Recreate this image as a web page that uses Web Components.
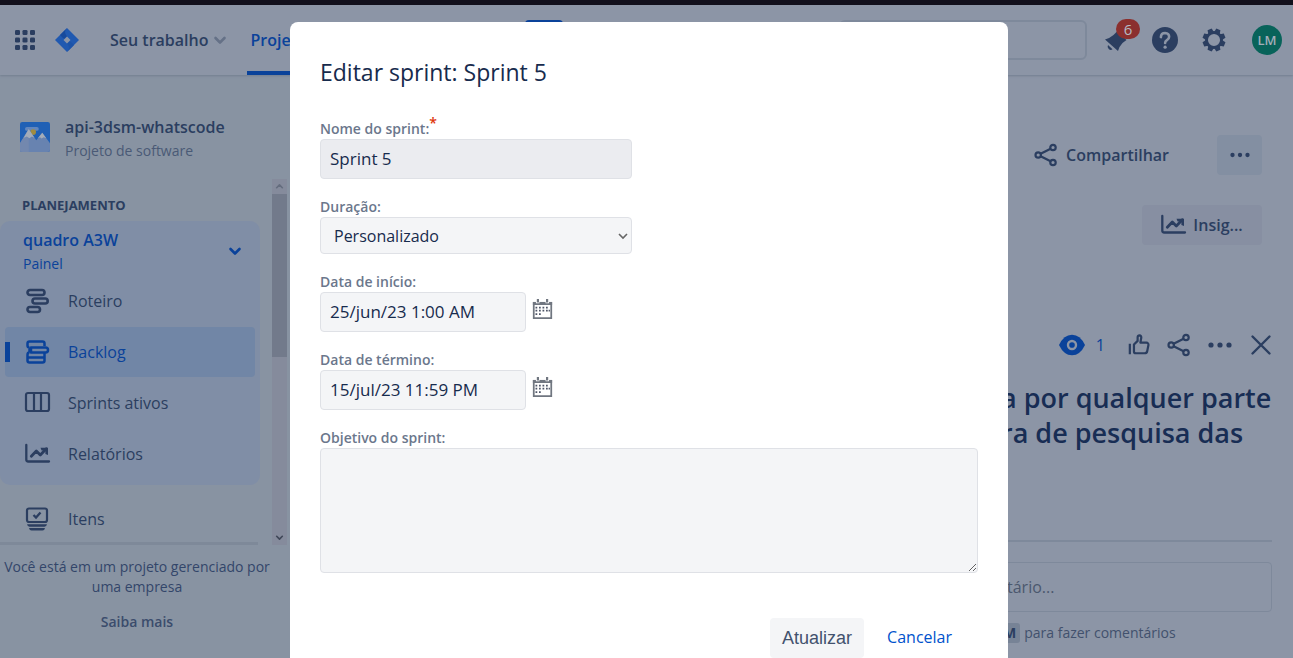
<!DOCTYPE html>
<html lang="pt-BR">
<head>
<meta charset="utf-8">
<title>Editar sprint</title>
<style>
  html, body { height: 100%; margin: 0; }
  body {
    overflow: hidden;
    background: #8c95a6;
    color: #2b3e60;
    font-family: "Open Sans", "Noto Sans", sans-serif;
    font-size: 16px;
    --blue: #0a429a;
    --line: #7e899b;
  }
</style>
</head>
<body>
<jira-page></jira-page>

<script>
const define = (name, html) => {
  const template = document.createElement('template');
  template.innerHTML = '<style>*{box-sizing:border-box}</style>' + html;
  customElements.define(name, class extends HTMLElement {
    constructor() {
      super();
      this.attachShadow({ mode: 'open' }).append(template.content.cloneNode(true));
    }
  });
};

const share = '<g fill="none" stroke="currentColor" stroke-width="2.2"><circle cx="4.2" cy="12" r="2.7"/><circle cx="19" cy="4.5" r="2.7"/><circle cx="19" cy="19.5" r="2.7"/><path d="M6.6 10.8 16.6 5.7M6.6 13.2l10 5.1"/></g>';
const chart = '<path d="M1.3 3v14.5q0 2 2 2H24" fill="none" stroke="currentColor" stroke-width="2.3" stroke-linecap="round"/><path d="m6.3 14.2 5-5.2 4 4 6-6.2" fill="none" stroke="currentColor" stroke-width="2.8" stroke-linecap="round" stroke-linejoin="round"/><path d="M15.5 5.8H23V13l-2.6-1V8.4h-3.8z" fill="currentColor"/>';
const ICONS = {
  apps: '<g fill="currentColor">' + [2, 9.5, 17].map(y => [2, 9.5, 17].map(x => `<rect x="${x}" y="${y}" width="5" height="5" rx="1.3"/>`).join('')).join('') + '</g>',
  logo: '<path d="M12 0 24 12 12 24 0 12z" fill="#2059b0"/><path d="M12 0q-4 4 0 8.500V12l-4-2-3-3z" fill="#174a9c"/><path d="M12 24q4-4 0-8.500V12l4 2 3 3z" fill="#1c53a8"/><path d="m12 8.500 3.500 3.500-3.500 3.500L8.500 12z" fill="#8c95a6"/>',
  chevron: '<path d="m7.500 10 4.500 4.500 4.500-4.500" fill="none" stroke="currentColor" stroke-width="2.600" stroke-linecap="round" stroke-linejoin="round"/>',
  bell: '<path d="M1 11.500q5-1.500 8.500-4.500l4-4 9 9-4 3q-3 3-4.500 8z" fill="currentColor"/><path d="M4 17l4.500 4.300q-2 1.400-3.800-.3T4 17z" fill="currentColor"/>',
  help: '<circle cx="12" cy="12" r="12" fill="currentColor"/><path d="M8.200 9.300q.2-3.800 3.900-3.800 3.700.2 3.700 3.500 0 1.900-2 3.100-1.700 1-1.700 2.700" fill="none" stroke="#8c95a6" stroke-width="2.400" stroke-linecap="round"/><circle cx="12.100" cy="18.600" r="1.500" fill="#8c95a6"/>',
  gear: '<circle cx="12" cy="12" r="7.500" fill="none" stroke="currentColor" stroke-width="2.900"/><g fill="currentColor">' + [22.5, 67.5, 112.5, 157.5, 202.5, 247.5, 292.5, 337.5].map(a => `<path transform="rotate(${a} 12 12)" d="M9 4.500 9.800.5h4.400l.8 4z"/>`).join('') + '</g>',
  roadmap: '<g fill="none" stroke="currentColor" stroke-width="2.600"><rect x="2.500" y="1" width="17" height="5" rx="2.500"/><rect x="7.500" y="9.500" width="15.200" height="5" rx="2.500"/><rect x="2.500" y="18" width="12.500" height="5" rx="2.500"/></g>',
  backlog: '<g fill="none" stroke="currentColor" stroke-width="2.500" stroke-linejoin="round"><path d="M4.500 7.500q-2 0-2-2v-2q0-2 2-2h13q2 0 2 2v2.500M6 7.500h14.500a2 2 0 0 1 0 5H6zM4.500 12.500q-2 0-2 2.200v5.800q0 2 2 2h13q2 0 2-2v-8M4.500 7.500v5M2.500 17.500h17"/></g>',
  board: '<g fill="none" stroke="currentColor" stroke-width="2.200"><rect x="1" y="2" width="23" height="18" rx="2"/><path d="M9 2v18M16 2v18"/></g>',
  chart, share,
  items: '<rect x="2" y="1.500" width="20" height="13.500" rx="2" fill="none" stroke="currentColor" stroke-width="2.200"/><path d="m8.500 8 2.500 2.500 4.500-5" fill="none" stroke="currentColor" stroke-width="2.300"/><path d="M2 17.300h20q-.5 2.400-2.500 2.400h-15Q2.500 19.700 2 17.300zM4 21h16q-.5 2.500-2.500 2.500h-11Q4.500 23.500 4 21z" fill="currentColor"/>',
  dots: '<g fill="currentColor"><circle cx="3" cy="12" r="2.600"/><circle cx="12" cy="12" r="2.600"/><circle cx="21" cy="12" r="2.600"/></g>',
  eye: '<path d="M0 12Q4.500 2.500 12 2.500T24 12q-4.500 9.500-12 9.500T0 12z" fill="currentColor"/><circle cx="12" cy="12" r="3.700" fill="currentColor" stroke="#8c95a6" stroke-width="2.200"/>',
  thumb: '<path d="M2 10.500V22M6.500 11.500l4-4V3.500q.2-2 2-2 2 .2 2 2.500L13.500 9.500h6.500q2.500.2 2.300 2.500L21 18.500q-.4 2.500-3 2.500H8.500q-2 0-2-2z" fill="none" stroke="currentColor" stroke-width="2.400" stroke-linejoin="round"/>',
  close: '<path d="m3.500 3.500 17 17m0-17-17 17" fill="none" stroke="currentColor" stroke-width="2.400" stroke-linecap="round"/>',
  calendar: '<path d="M2 5.500h20V23H2z" fill="#fff" stroke="#707680" stroke-width="2"/><path d="M1 4.500h22V8H1z" fill="#707680"/><path d="M4.500 1h4v5h-4zM15.500 1h4v5h-4z" fill="#fff"/><path d="M5.500 1h2.500v4H5.500zM16 1h2.500v4H16z" fill="#707680"/><path d="M8 10h2v2H8zM12 10h2v2h-2zM16 10h2v2h-2zM4 13.500h2v2H4zM8 13.500h2v2H8zM12 13.500h2v2h-2zM16 13.500h2v2h-2zM19 13.500h1.500v2H19zM4 17.500h2v2H4zM8 17.500h2v2H8zM4 10h2v2H4z" fill="#4f5668"/>',
  project: '<rect width="24" height="24" rx="1.800" fill="#2060b5"/><rect x="4" y="4" width="11" height="3" rx="1.500" fill="#6286bd"/><circle cx="10.500" cy="8" r="2.300" fill="#a08c40"/><path d="M0 17 7 5.500l6 9 4.800-6L24 17v5q0 2-2 2H2q-2 0-2-2z" fill="#6883b0"/><path d="M0 17 7 5.500v18.500H2q-2 0-2-2z" fill="#7388ae"/><path d="m7 5.500 4.500 7-2-1-2 1.500-2-1.500-2.500 1zM17.800 8.500 21 13l-2-.8-1.700 1-1.300-1-1.700.7z" fill="#a3acb9"/>'
};

customElements.define('ui-icon', class extends HTMLElement {
  connectedCallback() {
    if (this.shadowRoot) return;
    this.attachShadow({ mode: 'open' }).innerHTML =
      `<style>:host{display:inline-flex;flex:none;width:24px;height:24px}svg{width:100%;height:100%;overflow:visible}</style>
       <svg viewBox="0 0 24 24" aria-hidden="true">${ICONS[this.getAttribute('name')]}</svg>`;
  }
});

define('top-bar', `
<style>
  :host { display: flex; align-items: center; height: 75px; border-top: 5px solid #12101c; padding: 0 11px 0 13px; box-shadow: 0 1px 2px #737e90; position: relative; }
  button { all: unset; display: inline-flex; align-items: center; }
  nav { display: flex; align-self: stretch; margin-left: 31px; gap: 23px; flex: 1; }
  a { display: flex; align-items: center; color: inherit; text-decoration: none; font-weight: 600; font-size: 16px; }
  a.on { color: var(--blue); padding: 4px 3px 0; border-bottom: 4px solid var(--blue); }
  .chev { margin-right: -8px; color: #657187; }
  .create { align-self: center; margin-left: 184px; width: 38px; height: 40px; border-radius: 4px; background: var(--blue); }
  .logo { margin-left: 18px; }
  input { width: 248px; height: 40px; border: 2px solid var(--line); border-radius: 6px; background: transparent; margin-right: 17px; }
  .bell { position: relative; margin-right: 24px; }
  .badge { position: absolute; left: 12px; top: -9px; width: 24px; height: 20px; border-radius: 10px; background: #8b2f2e; color: #b5bac4; font-size: 15px; line-height: 20px; text-align: center; }
  .help { width: 26px; height: 26px; }
  .gear { margin: 0 26px 0 24px; }
  .avatar { justify-content: center; width: 30px; height: 30px; border-radius: 15px; background: #08635a; color: #a3aeb9; font-size: 13px; font-weight: 600; }
</style>
<button aria-label="Aplicativos"><ui-icon name="apps"></ui-icon></button>
<ui-icon class="logo" name="logo"></ui-icon>
<nav>
  <a href="#">Seu trabalho<ui-icon class="chev" name="chevron"></ui-icon></a>
  <a href="#" class="on">Projetos</a>
  <button class="create" aria-label="Criar"></button>
</nav>
<input type="search" aria-label="Pesquisar">
<button class="bell" aria-label="Notificações"><ui-icon name="bell"></ui-icon><span class="badge">6</span></button>
<button aria-label="Ajuda"><ui-icon class="help" name="help"></ui-icon></button>
<button class="gear" aria-label="Configurações"><ui-icon name="gear"></ui-icon></button>
<button class="avatar">LM</button>`);

define('nav-item', `
<style>
  :host { display: block; margin: 0 5px; height: 50px; border-radius: 4px; }
  a { display: flex; align-items: center; gap: 19px; height: 100%; padding: 0 20px; color: inherit; text-decoration: none; font-size: 16px; }
  :host([current]) { background: #7186a6; color: var(--blue); }
  :host([current]) a { padding-left: 0; }
  :host([current]) a::before { content: ""; width: 5px; height: 20px; margin-right: -4px; background: var(--blue); }
</style>
<a href="#"><slot></slot></a>`);

define('side-bar', `
<style>
  :host { display: flex; flex-direction: column; background: #8893a2; }
  .project { display: flex; align-items: center; gap: 15px; padding: 40px 20px 16px; }
  .project ui-icon { width: 30px; height: 30px; margin-bottom: 4px; }
  h2 { margin: 0; font-size: 16px; line-height: 24px; font-weight: 600; }
  p { margin: 0; font-size: 14px; line-height: 24px; color: #4a5a76; }
  .scroll { display: flex; justify-content: space-between; height: 366px; }
  .list { width: 260px; }
  h3 { margin: 0; padding: 16px 22px 6px; font-size: 13px; line-height: 20px; font-weight: 700; }
  .group { background: #808ea6; border-radius: 10px; padding-bottom: 6px; display: flex; flex-direction: column; gap: 1px; margin-bottom: 9px; }
  .board { all: unset; box-sizing: border-box; display: flex; justify-content: space-between; align-items: center; height: 54px; padding: 6px 13px 0 23px; color: var(--blue); }
  .board strong { display: block; font-size: 16px; line-height: 26px; font-weight: 600; }
  .board small { display: block; font-size: 14px; line-height: 22px; }
  .end { height: 3px; margin: -2px 2px 0 0; background: #7e8999; }
  .bar { display: flex; flex-direction: column; width: 15px; margin-right: 3px; background: #858b9c; color: #646d7e; }
  .bar ui-icon { width: 15px; height: 15px; }
  .bar ui-icon:last-child { margin-top: auto; color: #3f4758; }
  .up { transform: rotate(180deg); }
  .thumb { height: 163px; background: #727a8b; }
  footer { padding: 12px 16px 0 0; text-align: center; font-size: 14px; line-height: 20px; color: #33466a; }
  footer a { display: block; margin-top: 15px; color: #3b4c6c; font-weight: 600; text-decoration: none; }
</style>
<div class="project"><ui-icon name="project"></ui-icon><div><h2>api-3dsm-whatscode</h2><p>Projeto de software</p></div></div>
<div class="scroll">
  <div class="list">
    <h3>PLANEJAMENTO</h3>
    <div class="group">
      <button class="board"><span><strong>quadro A3W</strong><small>Painel</small></span><ui-icon name="chevron"></ui-icon></button>
      <nav-item><ui-icon name="roadmap"></ui-icon>Roteiro</nav-item>
      <nav-item current><ui-icon name="backlog"></ui-icon>Backlog</nav-item>
      <nav-item><ui-icon name="board"></ui-icon>Sprints ativos</nav-item>
      <nav-item><ui-icon name="chart"></ui-icon>Relatórios</nav-item>
    </div>
    <nav-item><ui-icon name="items"></ui-icon>Itens</nav-item>
    <div class="end"></div>
  </div>
  <div class="bar"><ui-icon class="up" name="chevron"></ui-icon><div class="thumb"></div><ui-icon name="chevron"></ui-icon></div>
</div>
<footer>Você está em um projeto gerenciado por<br>uma empresa<a href="#">Saiba mais</a></footer>`);

define('issue-panel', `
<style>
  :host { display: flex; flex-direction: column; align-items: flex-end; }
  button { all: unset; box-sizing: border-box; display: inline-flex; align-items: center; justify-content: center; gap: 8px; height: 40px; font-size: 16px; font-weight: 600; }
  .row { display: flex; align-items: center; }
  .top { padding: 60px 31px 30px 0; }
  .more { width: 45px; margin-left: 48px; border-radius: 4px; background: #838fa2; }
  .more ui-icon { width: 20px; height: 20px; }
  .insights { width: 120px; margin-right: 31px; border-radius: 4px; background: #878fa2; }
  .tools { padding: 80px 20px 0 0; gap: 17px; }
  .tools .watch { color: var(--blue); gap: 11px; margin-right: 6px; font-weight: 400; }
  .watch ui-icon { width: 26px; height: 26px; }
  .like ui-icon { width: 22px; height: 22px; }
  .body { width: 292px; padding-right: 21px; }
  h1 { margin: 15px -20px 90px 0; font-size: 27px; line-height: 35px; font-weight: 600; color: #182d54; }
  hr { margin: 0; border: 0; height: 2px; background: var(--line); }
  input { display: block; width: 100%; height: 50px; margin: 20px 0 11px; border: 1px solid var(--line); border-radius: 4px; background: transparent; padding: 0 5px; font: 400 16px "Open Sans", sans-serif; }
  input::placeholder { color: #4b586e; opacity: 1; }
  .hint { font-size: 14px; line-height: 20px; color: #42516d; }
  kbd { display: inline-block; font: inherit; font-weight: 700; padding: 0 4px 0 2px; border-radius: 3px; background: #778396; margin-right: 4px; color: #2b3e60; }
</style>
<div class="row top"><button><ui-icon name="share"></ui-icon>Compartilhar</button><button class="more" aria-label="Mais"><ui-icon name="dots"></ui-icon></button></div>
<button class="insights"><ui-icon name="chart"></ui-icon>Insig...</button>
<div class="row tools">
  <button class="watch"><ui-icon name="eye"></ui-icon>1</button>
  <button class="like" aria-label="Gostei"><ui-icon name="thumb"></ui-icon></button>
  <button aria-label="Compartilhar item"><ui-icon name="share"></ui-icon></button>
  <button aria-label="Ações"><ui-icon name="dots"></ui-icon></button>
  <button aria-label="Fechar"><ui-icon name="close"></ui-icon></button>
</div>
<div class="body">
  <h1>a por qualquer parte<br>ra de pesquisa das</h1>
  <hr>
  <input placeholder="tário..." aria-label="Comentário">
  <div class="hint"><kbd>M</kbd>para fazer comentários</div>
</div>`);

define('form-row', `
<style>
  :host { display: block; font-size: 14px; line-height: 20px; font-weight: 600; color: #6b778c; }
  .control { display: flex; align-items: flex-start; gap: 6px; }
</style>
<div><slot name="label"></slot></div>
<div class="control"><slot></slot></div>`);

define('sprint-dialog', `
<style>
  :host { display: block; background: #fff; border-radius: 8px; padding: 34px 30px; width: 718px; color: #172b4d; }
  h1 { margin: 0 0 31px; font-size: 23px; line-height: 32px; font-weight: 400; }
  form { display: grid; gap: 18px; }
  label { display: block; }
  sup { color: #de350b; font-size: 14px; line-height: 0; }
  input, select, textarea { display: block; height: 40px; width: 312px; margin: 0; padding: 0 9px 2px; border: 1px solid #dfe1e6; border-radius: 4px; background-color: #f4f5f7; color: #172b4d; font: 400 17px "Open Sans", sans-serif; }
  #name { background: #ebecf0; }
  select { appearance: none; height: 37px; padding: 0 13px; font-size: 16px; background: #f4f5f7 url("data:image/svg+xml,%3Csvg xmlns='http://www.w3.org/2000/svg' viewBox='0 0 10 10'%3E%3Cpath d='M1 3l4 4 4-4' fill='none' stroke='%23666' stroke-width='1.600'/%3E%3C/svg%3E") right 3px center / 10px no-repeat; }
  .date { width: 206px; }
  .cal { all: unset; margin-top: 6px; height: 20px; }
  .cal ui-icon { width: 21px; height: 21px; }
  textarea { width: 100%; height: 125px; padding: 8px; resize: both; }
  .actions { display: flex; justify-content: flex-end; align-items: center; gap: 23px; margin-top: 27px; padding-right: 26px; font-size: 16px; }
  .actions button { height: 40px; padding: 0 12px; border: 0; border-radius: 4px; background: #f4f5f7; color: #42526e; font: 18px "Liberation Sans", sans-serif; }
  .actions a { color: #0052cc; text-decoration: none; padding-bottom: 2px; }
</style>
<h1 id="title">Editar sprint: Sprint 5</h1>
<form>
  <form-row><label slot="label" for="name">Nome do sprint:<sup>*</sup></label><input id="name" value="Sprint 5"></form-row>
  <form-row><label slot="label" for="duration">Duração:</label><select id="duration"><option>Personalizado</option></select></form-row>
  <form-row><label slot="label" for="start">Data de início:</label><input class="date" id="start" value="25/jun/23 1:00 AM"><button type="button" class="cal" aria-label="Escolher início"><ui-icon name="calendar"></ui-icon></button></form-row>
  <form-row><label slot="label" for="end">Data de término:</label><input class="date" id="end" value="15/jul/23 11:59 PM"><button type="button" class="cal" aria-label="Escolher término"><ui-icon name="calendar"></ui-icon></button></form-row>
  <form-row><label slot="label" for="goal">Objetivo do sprint:</label><textarea id="goal"></textarea></form-row>
  <div class="actions"><button type="button">Atualizar</button><a href="#">Cancelar</a></div>
</form>`);

define('jira-page', `
<style>
  :host { display: block; height: 100%; }
  .columns { display: grid; grid-template-columns: 290px 1fr; min-height: calc(100% - 75px); }
  .layer { position: fixed; inset: 0; overflow: hidden; display: flex; justify-content: center; align-items: flex-start; padding: 22px 0 0 5px; }
</style>
<top-bar></top-bar>
<div class="columns"><side-bar></side-bar><issue-panel></issue-panel></div>
<div class="layer"><sprint-dialog role="dialog" aria-labelledby="title"></sprint-dialog></div>`);
</script>
</body>
</html>
